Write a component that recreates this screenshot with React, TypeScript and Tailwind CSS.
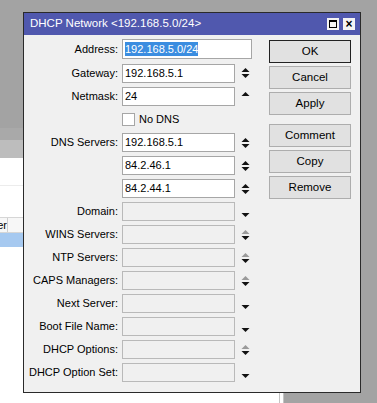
import React from 'react';

type Arrow = 'both' | 'up' | 'down' | 'dim';

function Spin({ kind }: { kind: Arrow }) {
  const upColor = kind === 'dim' ? '#9a9a9a' : '#111';
  return (
    <svg width="9" height="10" viewBox="0 0 9 10" className="shrink-0">
      {kind !== 'down' && <polygon points="0.5,4 4.5,0 8.5,4" fill={upColor} />}
      {kind !== 'up' && <polygon points="0.5,6 8.5,6 4.5,10" fill="#111" />}
    </svg>
  );
}

interface Field {
  label: string;
  value?: string;
  arrow: Arrow;
  disabled?: boolean;
}

const fields: Field[] = [
  { label: 'DNS Servers:', value: '192.168.5.1', arrow: 'both' },
  { label: '', value: '84.2.46.1', arrow: 'both' },
  { label: '', value: '84.2.44.1', arrow: 'both' },
  { label: 'Domain:', arrow: 'down', disabled: true },
  { label: 'WINS Servers:', arrow: 'dim', disabled: true },
  { label: 'NTP Servers:', arrow: 'dim', disabled: true },
  { label: 'CAPS Managers:', arrow: 'dim', disabled: true },
  { label: 'Next Server:', arrow: 'down', disabled: true },
  { label: 'Boot File Name:', arrow: 'down', disabled: true },
  { label: 'DHCP Options:', arrow: 'dim', disabled: true },
  { label: 'DHCP Option Set:', arrow: 'down', disabled: true },
];

function Row({ f }: { f: Field }) {
  return (
    <div className="flex h-[23px] items-center">
      <div className="w-[95px] shrink-0 pr-[1px] text-right">{f.label}</div>
      <div
        className={`ml-[3px] flex h-[19px] w-[113px] items-center border px-[2px] ${
          f.disabled ? 'border-[#b9b9b9] bg-[#f0f0f0]' : 'border-[#a6a6a6] bg-white'
        }`}
      >
        {f.value}
      </div>
      <div className="ml-[6px] flex w-[9px] justify-center">
        <Spin kind={f.arrow} />
      </div>
    </div>
  );
}

const buttons = ['OK', 'Cancel', 'Apply', 'Comment', 'Copy', 'Remove'];

export default function App() {
  return (
    <div
      className="relative h-[403px] w-[377px] overflow-hidden bg-[#a3a3a3] text-[11px] text-black"
      style={{ fontFamily: '"Liberation Sans", Arial, sans-serif' }}
    >
      {/* window behind the dialog */}
      <div className="absolute left-0 top-[128px] flex h-[275px] w-[284px] flex-col bg-white">
        <div className="h-[12px] bg-[#a9a9a9]" />
        <div className="h-[18px] bg-[#bdbdbd]" />
        <div className="h-[28px] border-b border-[#ececec] bg-white" />
        <div className="h-[31px] bg-white" />
        <div className="flex h-[16px] border-y border-[#d6d6d6] bg-[#f7f7f7]">
          <div className="flex w-[8px] justify-end overflow-hidden border-r border-[#cfcfcf] leading-[14px]">
            <span className="shrink-0">Server</span>
          </div>
        </div>
        <div className="h-[14px] bg-[#a6c9f0]" />
        <div className="flex-1 bg-white" />
        <div className="absolute right-0 top-0 h-full w-[5px] border-x border-[#c4c4c4] bg-white" />
      </div>

      {/* dialog */}
      <div className="absolute left-[23px] top-[12px] flex h-[381px] w-[338px] flex-col border border-[#2a2a2a] bg-[#f0f0f0]">
        <div className="flex h-[22px] shrink-0 items-center justify-between bg-[#5058ae] pl-[6px] pr-[5px] text-[11.5px] text-white">
          <span>DHCP Network &lt;192.168.5.0/24&gt;</span>
          <div className="flex gap-[4px]">
            <div className="flex h-[12px] w-[12px] items-center justify-center bg-[#f4f4f4]">
              <div className="h-[8px] w-[8px] border border-t-2 border-black" />
            </div>
            <div className="flex h-[12px] w-[12px] items-center justify-center bg-[#f4f4f4] text-[12px] font-bold leading-none text-black">
              ×
            </div>
          </div>
        </div>

        <div className="flex pt-[2px]">
          <div className="flex flex-col">
            <div className="flex h-[24px] items-center">
              <div className="w-[95px] shrink-0 pr-[1px] text-right">Address:</div>
              <div className="ml-[3px] flex h-[20px] w-[130px] items-center border border-[#a6a6a6] bg-white px-[2px]">
                <span className="bg-[#3b8de0] leading-[14px] text-white">192.168.5.0/24</span>
              </div>
            </div>
            <div className="flex h-[24px] items-center">
              <div className="w-[95px] shrink-0 pr-[1px] text-right">Gateway:</div>
              <div className="ml-[3px] flex h-[19px] w-[113px] items-center border border-[#a6a6a6] bg-white px-[2px]">
                192.168.5.1
              </div>
              <div className="ml-[6px] flex w-[9px] justify-center">
                <Spin kind="both" />
              </div>
            </div>
            <div className="flex h-[23px] items-center">
              <div className="w-[95px] shrink-0 pr-[1px] text-right">Netmask:</div>
              <div className="ml-[3px] flex h-[19px] w-[113px] items-center border border-[#a6a6a6] bg-white px-[2px]">
                24
              </div>
              <div className="ml-[6px] flex w-[9px] justify-center">
                <Spin kind="up" />
              </div>
            </div>
            <div className="flex h-[23px] items-center pl-[98px]">
              <div className="h-[13px] w-[13px] border border-[#a6a6a6] bg-white" />
              <span className="ml-[4px]">No DNS</span>
            </div>
            {fields.map((f, i) => (
              <Row key={i} f={f} />
            ))}
          </div>

          <div className="ml-[17px] mt-[3px] flex w-[82px] flex-col gap-[3px]">
            {buttons.map((b, i) => (
              <div
                key={b}
                className={`flex h-[23px] items-center justify-center border bg-[#e1e1e1] text-[11.5px] ${
                  i === 0 ? 'border-[#222]' : 'border-[#adadad]'
                } ${i === 3 ? 'mt-[6px]' : ''}`}
              >
                {b}
              </div>
            ))}
          </div>
        </div>
      </div>
    </div>
  );
}
